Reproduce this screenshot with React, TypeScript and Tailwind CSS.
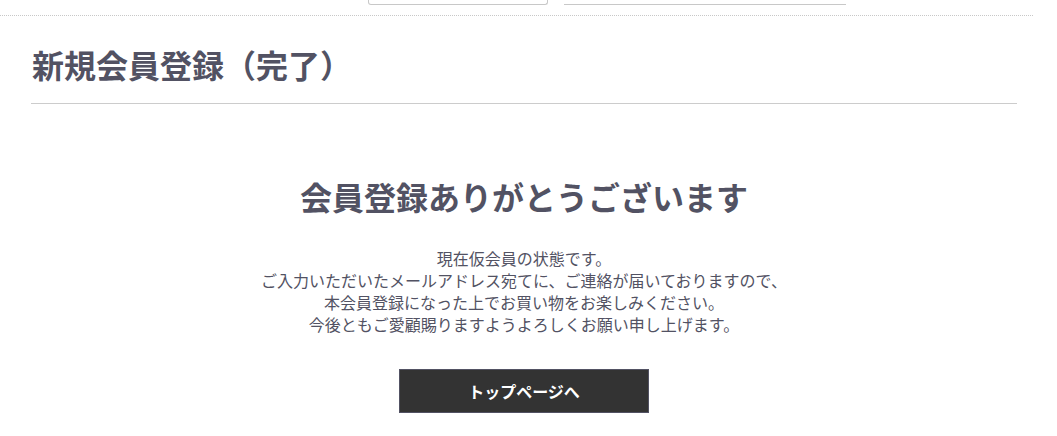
import React from "react";

const font = { fontFamily: '"Noto Sans CJK JP", "Noto Sans", sans-serif' };

const App: React.FC = () => {
  return (
    <div className="min-h-screen bg-white text-[#525263]" style={font}>
      {/* tail of the header search form */}
      <div className="flex h-[5px]">
        <div className="ml-[368px] w-[180px] h-[5px] border-x border-b border-[#c8c8c8] rounded-b-[3px]" />
        <div className="ml-[16px] w-[282px] h-[5px] border-b border-[#c8c8c8]" />
      </div>
      <div className="mt-[10px] w-[1033px] border-b border-dotted border-[#c8c8c8]" />

      <div className="ml-[31px] w-[986px]">
        <div className="mt-[24px] pb-[15px] border-b border-[#cccccc]">
          <h1 className="text-[32px] leading-[48px] font-bold pl-[1px]">新規会員登録（完了）</h1>
        </div>

        <div className="flex flex-col items-center">
          <h2 className="mt-[68px] text-[32px] leading-[48px] font-bold">会員登録ありがとうございます</h2>
          <p className="mt-[27px] text-[16px] leading-[22px] text-center">
            現在仮会員の状態です。
            <br />
            ご入力いただいたメールアドレス宛てに、ご連絡が届いておりますので、
            <br />
            本会員登録になった上でお買い物をお楽しみください。
            <br />
            今後ともご愛顧賜りますようよろしくお願い申し上げます。
          </p>
          <button className="mt-[34px] w-[250px] h-[44px] bg-[#333333] border border-[#525263] text-white text-[16px] font-bold">
            トップページへ
          </button>
        </div>
      </div>
    </div>
  );
};

export default App;
